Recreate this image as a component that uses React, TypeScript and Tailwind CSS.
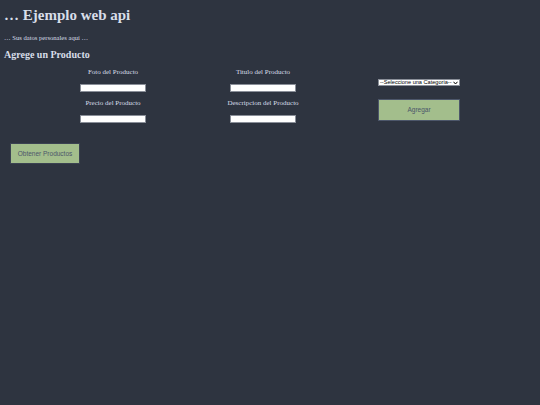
import React from "react";

function Field({ label, mt }: { label: string; mt: string }) {
  return (
    <div className={`flex flex-col items-center ${mt}`}>
      <label className="block h-[7px] text-[7px] leading-[7px] whitespace-nowrap">{label}</label>
      <input
        type="text"
        className="mt-[8px] block h-[8px] w-[66px] border border-[#8a8f99] bg-white p-0 outline-none"
      />
    </div>
  );
}

export default function App() {
  return (
    <div
      className="min-h-[405px] w-full bg-[#2e3440] text-[#d8dee9]"
      style={{ fontFamily: '"Liberation Serif", "Times New Roman", serif' }}
    >
      <div className="flow-root">
        <h1 className="ml-[4px] mt-[8px] text-[15px] font-bold leading-[15px] whitespace-nowrap">
          … Ejemplo web api
        </h1>
        <p className="ml-[4px] mt-[11px] text-[6.6px] leading-[7px] whitespace-nowrap">
          … Sus datos personales aquí …
        </p>
        <h2 className="ml-[4px] mt-[9px] text-[10px] font-bold leading-[10px] whitespace-nowrap">
          Agrege un Producto
        </h2>

        <div className="mt-[9px] flex">
          <div className="ml-[38px] flex w-[150px] flex-col">
            <Field label="Foto del Producto" mt="" />
            <Field label="Precio del Producto" mt="mt-[8px]" />
          </div>
          <div className="flex w-[150px] flex-col">
            <Field label="Titulo del Producto" mt="" />
            <Field label="Descripcion del Producto" mt="mt-[8px]" />
          </div>
          <div className="ml-[40px] flex flex-col pt-[10px]">
            <div
              className="flex h-[7px] w-[82px] items-center justify-between border border-[#8a8f99] bg-white pl-[1px] pr-[1px] text-[5.6px] leading-[5px] text-black"
              style={{ fontFamily: '"Liberation Sans", Arial, sans-serif' }}
            >
              <span className="whitespace-nowrap">--Seleccione una Categoria--</span>
              <svg width="5" height="4" viewBox="0 0 10 8" className="shrink-0">
                <path d="M1 1.5 L5 6 L9 1.5" fill="none" stroke="#000" strokeWidth="2" />
              </svg>
            </div>
            <button
              className="mt-[13px] flex h-[22px] w-[82px] items-center justify-center border border-[#4c566a] bg-[#a3be8c] text-[6.5px] text-[#4c566a]"
              style={{ fontFamily: '"Liberation Sans", Arial, sans-serif' }}
            >
              Agregar
            </button>
          </div>
        </div>

        <button
          className="ml-[10px] mt-[20px] flex h-[21px] w-[70px] items-center justify-center border border-[#3b4252] bg-[#a3be8c] text-[6.5px] text-[#4c566a]"
          style={{ fontFamily: '"Liberation Sans", Arial, sans-serif' }}
        >
          Obtener Productos
        </button>
      </div>
    </div>
  );
}
